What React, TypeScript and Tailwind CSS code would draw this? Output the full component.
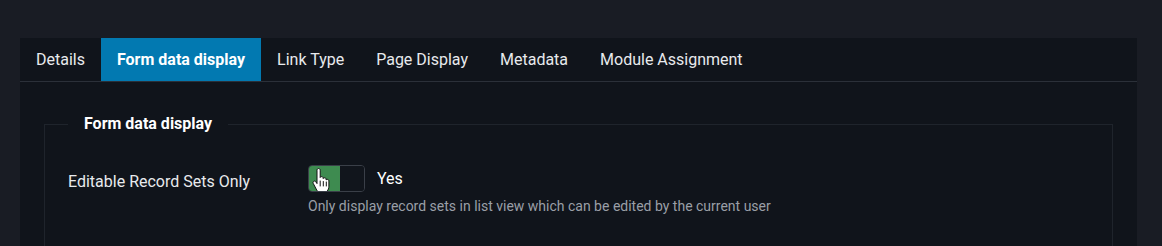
import React from 'react';

const tabs = ['Details', 'Form data display', 'Link Type', 'Page Display', 'Metadata', 'Module Assignment'];

const HandCursor = () => (
  <svg className="absolute left-[3px] top-[2px]" width="20" height="26" viewBox="0 0 20 26" fill="none">
    <path
      d="M5 2.2c0-1 .7-1.7 1.6-1.7s1.6.7 1.6 1.7v7.3c.3-.6.8-.9 1.5-.9.9 0 1.5.6 1.5 1.5v.5c.3-.5.8-.8 1.4-.8.9 0 1.5.6 1.5 1.5v.7c.3-.4.8-.6 1.3-.6.9 0 1.5.7 1.5 1.6v5.2c0 3.9-2.5 6.8-6.3 6.8H9.6c-2.2 0-3.6-1-4.8-2.8L1.3 15.5c-.5-.8-.3-1.7.4-2.1.7-.5 1.6-.3 2.1.4L5 15.6V2.2z"
      fill="#fff"
      stroke="#111"
      strokeWidth="1"
    />
    <path d="M8.2 13v5M11.3 13.5v4.5M14.3 14v4" stroke="#111" strokeWidth="1" strokeLinecap="round" />
  </svg>
);

export default function App() {
  return (
    <div className="min-h-[246px] bg-[#191c24] pt-[38px] px-5 font-['Roboto',sans-serif] overflow-hidden">
      <div className="bg-[#10141b] w-[1117px] min-h-[220px]">
        <div className="flex border-b border-[#2b3039] h-[44px]">
          {tabs.map((t, i) => (
            <div
              key={t}
              className={
                i === 1
                  ? 'px-4 flex items-center bg-[#0279b1] text-white font-bold text-[16px]'
                  : 'px-4 flex items-center text-[#e8eaed] text-[16px]'
              }
            >
              {t}
            </div>
          ))}
        </div>
        <div className="px-6 pt-[32px]">
          <fieldset className="border border-[#1f242c] pl-[23px] pr-6 pb-8 min-h-[140px]">
            <legend className="px-4 text-white font-bold text-[16px] leading-5">Form data display</legend>
            <div className="flex items-start mt-[31px]">
              <div className="w-[240px] text-[#e8eaed] text-[16px] pt-[5px]">Editable Record Sets Only</div>
              <div className="flex flex-col">
                <div className="flex items-center gap-3">
                  <div className="relative flex w-[57px] h-[27px] rounded-[4px] border border-[#3a3f48] overflow-hidden">
                    <div className="w-[31px] bg-[#3e8b50]"></div>
                    <div className="flex-1 bg-[#11151c]"></div>
                    <HandCursor />
                  </div>
                  <span className="text-white text-[16px]">Yes</span>
                </div>
                <div className="text-[#9a9fa7] text-[14px] leading-5 mt-[4px]">
                  Only display record sets in list view which can be edited by the current user
                </div>
              </div>
            </div>
          </fieldset>
        </div>
      </div>
    </div>
  );
}
